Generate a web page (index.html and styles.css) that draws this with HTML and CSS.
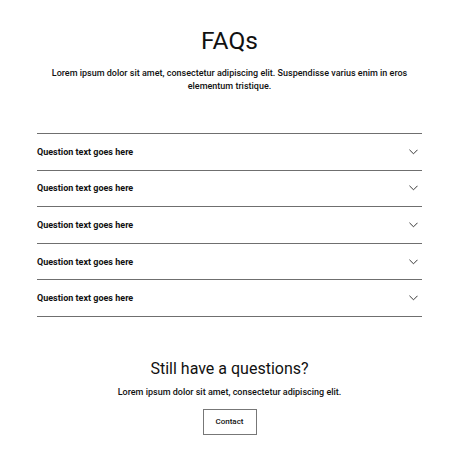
FILE: index.html
```html
<!DOCTYPE html>
<html lang="en">
<head>
    <meta charset="UTF-8">
    <meta name="viewport" content="width=device-width, initial-scale=1.0">
    <title>FAQs</title>
    <link rel="stylesheet" href="styles.css">
</head>
<body>
    <div class="page">
        <div class="intro">
            <h1>FAQs</h1>
            <p>Lorem ipsum dolor sit amet, consectetur adipiscing elit. Suspendisse varius enim in eros elementum tristique.</p>
        </div>

        <div class="faq-list">
            <div class="faq-item">
                <span>Question text goes here</span>
                <svg class="chevron" viewBox="0 0 10 6"><path d="M0.5 0.5 L5 5 L9.5 0.5"/></svg>
            </div>
            <div class="faq-item">
                <span>Question text goes here</span>
                <svg class="chevron" viewBox="0 0 10 6"><path d="M0.5 0.5 L5 5 L9.5 0.5"/></svg>
            </div>
            <div class="faq-item">
                <span>Question text goes here</span>
                <svg class="chevron" viewBox="0 0 10 6"><path d="M0.5 0.5 L5 5 L9.5 0.5"/></svg>
            </div>
            <div class="faq-item">
                <span>Question text goes here</span>
                <svg class="chevron" viewBox="0 0 10 6"><path d="M0.5 0.5 L5 5 L9.5 0.5"/></svg>
            </div>
            <div class="faq-item">
                <span>Question text goes here</span>
                <svg class="chevron" viewBox="0 0 10 6"><path d="M0.5 0.5 L5 5 L9.5 0.5"/></svg>
            </div>
        </div>

        <div class="contact">
            <h2>Still have a questions?</h2>
            <p>Lorem ipsum dolor sit amet, consectetur adipiscing elit.</p>
            <button class="contact-btn">Contact</button>
        </div>
    </div>
</body>
</html>
```

FILE: styles.css
```css
body {
    margin: 0;
    font-family: Roboto, "Liberation Sans", sans-serif;
    color: #111;
    background: #fff;
}
.page {
    width: 385px;
    margin-left: 37px;
    padding-top: 25px;
}
.intro {
    text-align: center;
}
.intro h1 {
    margin: 0;
    font-size: 24.5px;
    font-weight: 400;
    line-height: 31px;
}
.intro p {
    margin: 11px auto 0;
    width: 380px;
    font-size: 9px;
    font-weight: 500;
    line-height: 13px;
}
.faq-list {
    margin-top: 40px;
    border-bottom: 1px solid #6f6f6f;
}
.faq-item {
    display: flex;
    justify-content: space-between;
    align-items: center;
    height: 35.6px;
    border-top: 1px solid #6f6f6f;
    font-size: 9px;
    font-weight: 700;
}
.chevron {
    width: 9px;
    height: 6px;
    margin-right: 4px;
    fill: none;
    stroke: #222;
    stroke-width: 1;
}
.contact {
    margin-top: 41px;
    text-align: center;
}
.contact h2 {
    margin: 0;
    font-size: 16px;
    font-weight: 400;
    line-height: 22px;
}
.contact p {
    margin: 6px 0 0;
    font-size: 9px;
    font-weight: 500;
    line-height: 13px;
}
.contact-btn {
    margin-top: 10px;
    width: 54px;
    height: 26px;
    background: #fff;
    border: 1px solid #777;
    font-family: inherit;
    font-size: 8px;
    font-weight: 500;
    color: #111;
    padding: 0;
}
```
